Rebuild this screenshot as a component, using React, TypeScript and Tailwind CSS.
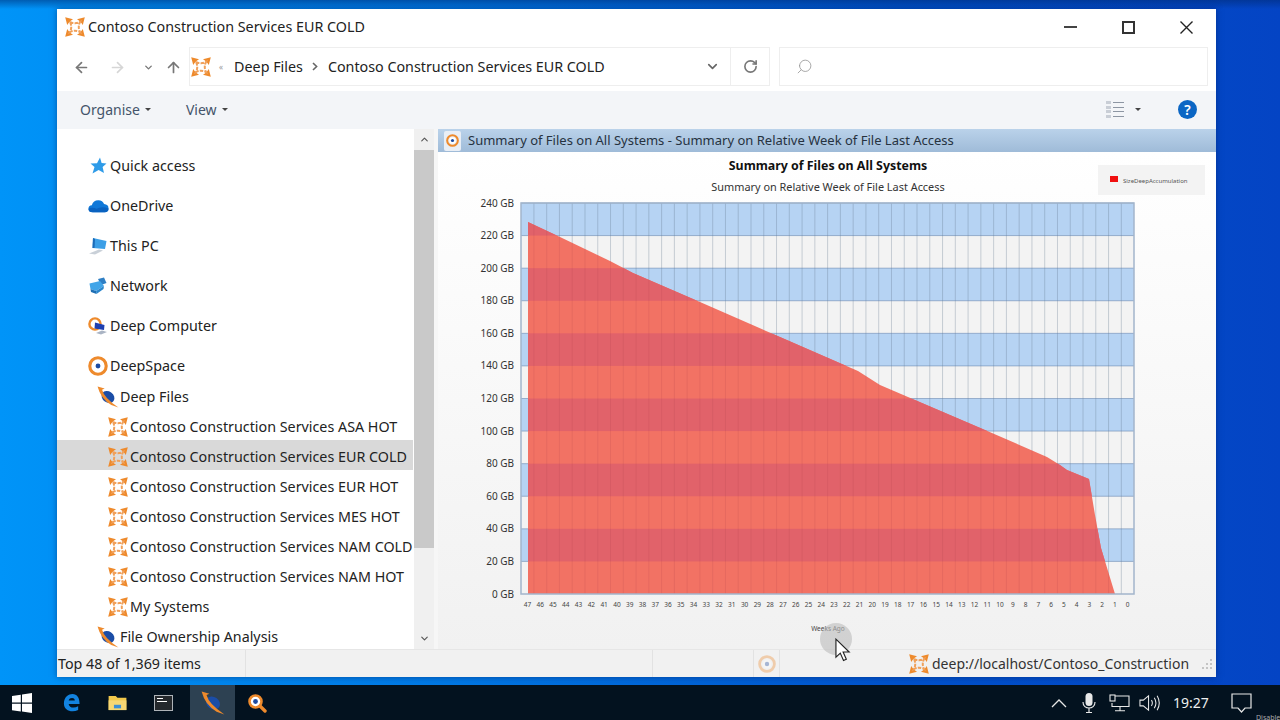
import { ArrowLeft, ArrowRight, ArrowUp, ChevronDown, ChevronUp, RotateCw, Search } from "lucide-react";

const font = "font-['Noto_Sans','Open_Sans',sans-serif]";

function DeepLogo({ className = "w-5 h-5", opacity = 1 }: { className?: string; opacity?: number }) {
	return (
		<svg viewBox="0 0 20 20" className={`shrink-0 ${className}`} opacity={opacity}>
			<g fill="#ee8a2c">
				<path d="M0.2 0.2 L8 2.2 L5.8 3.8 L3.8 5.8 L2.2 8 Z" />
				<path d="M19.8 0.2 L17.8 8 L16.2 5.8 L14.2 3.8 L12 2.2 Z" />
				<path d="M0.2 19.8 L2.2 12 L3.8 14.2 L5.8 16.2 L8 17.8 Z" />
				<path d="M19.8 19.8 L12 17.8 L14.2 16.2 L16.2 14.2 L17.8 12 Z" />
			</g>
			<path d="M5 5 Q10 7.5 15 5 Q12.5 10 15 15 Q10 12.5 5 15 Q7.5 10 5 5 Z" fill="none" stroke="#f0a05a" strokeWidth="2" strokeDasharray="3.5 1.2" />
		</svg>
	);
}

function TargetIcon({ className = "w-5 h-5", opacity = 1 }: { className?: string; opacity?: number }) {
	return (
		<svg viewBox="0 0 18 18" className={`shrink-0 ${className}`} opacity={opacity}>
			<circle cx="9" cy="9" r="7.4" fill="none" stroke="#ee8a2c" strokeWidth="2.8" />
			<circle cx="9" cy="9" r="4.4" fill="#fff" />
			<circle cx="9" cy="9" r="2.2" fill="#1c4aa0" />
		</svg>
	);
}

function PlanetIcon({ className = "w-[22px] h-[22px]" }: { className?: string }) {
	return (
		<svg viewBox="0 0 20 20" className={`shrink-0 ${className}`}>
			<ellipse cx="10" cy="10" rx="6.2" ry="5" transform="rotate(35 10 10)" fill="#1b4da6" />
			<path d="M0.5 0.5 L7 2.2 L4.6 3.4 Q6.5 11 19.5 19.5 L13 17.2 Q3.5 12 0.5 0.5 Z" fill="#ee8a2c" />
		</svg>
	);
}

function QuickIcon() {
	return (
		<svg viewBox="0 0 18 18" className="h-[18px] w-[18px] shrink-0">
			<path d="M11 0.5 L12.6 6 L17.5 6.6 L13.6 10 L15 16 L9.6 13 L3.5 16.5 L5.5 10 L1.5 6.5 L8 6.2 Z" fill="#2e9be8" />
		</svg>
	);
}

function CloudIcon() {
	return (
		<svg viewBox="0 0 22 14" className="h-[14px] w-[21px] shrink-0">
			<path d="M5 13.5 Q0.5 13.5 0.5 9.8 Q0.5 6.6 4 6.3 Q5.5 1 10.8 1 Q15.5 1 16.8 5 Q21.5 5.4 21.5 9.6 Q21.5 13.5 17.5 13.5 Z" fill="#1078d8" />
			<path d="M5 13.5 Q0.5 13.5 0.5 9.8 Q5 8 9 10 Q14 7 21.5 9.6 Q21.5 13.5 17.5 13.5 Z" fill="#0a62c0" />
		</svg>
	);
}

function PcIcon() {
	return (
		<svg viewBox="0 0 20 18" className="h-[18px] w-5 shrink-0">
			<path d="M5 1 L18.5 4 L17 12 L4.5 11 Z" fill="#3c9fe6" />
			<path d="M5 1 L7 2 L6.5 11 L4.5 11 Z" fill="#1b6bb8" />
			<path d="M1 16.5 L11 12.5 L15 13.5 L7 17.5 Z" fill="#c9d0d8" />
		</svg>
	);
}

function NetworkIcon() {
	return (
		<svg viewBox="0 0 20 18" className="h-[18px] w-5 shrink-0">
			<path d="M10 2 L16 0.5 L18.5 6 L13 8 Z" fill="#2f7fc4" />
			<path d="M1.5 6.5 L12 4 L16 9 L8 14 L2.5 12 Z" fill="#42a5e8" />
			<path d="M2.5 12 L8 14 L8.5 17 L3 15 Z" fill="#1e6fb4" />
			<path d="M8 14 L16 9 L15.5 12 L8.5 17 Z" fill="#2a86cc" />
		</svg>
	);
}

function DeepComputerIcon() {
	return (
		<svg viewBox="0 0 20 18" className="h-[18px] w-5 shrink-0">
			<circle cx="7" cy="7" r="5.6" fill="none" stroke="#ee8a2c" strokeWidth="2.4" />
			<path d="M7 5.5 L16.5 8 L16 13 L6.5 11.5 Z" fill="#1f3fb0" />
			<path d="M8 16 L14 13.5 L19 15 L13 17.5 Z" fill="#aab4c4" />
		</svg>
	);
}

const plain = [
	{ label: "Quick access", icon: <QuickIcon /> },
	{ label: "OneDrive", icon: <CloudIcon /> },
	{ label: "This PC", icon: <PcIcon /> },
	{ label: "Network", icon: <NetworkIcon /> },
	{ label: "Deep Computer", icon: <DeepComputerIcon /> },
];

const systems = [
	"Contoso Construction Services ASA HOT",
	"Contoso Construction Services EUR COLD",
	"Contoso Construction Services EUR HOT",
	"Contoso Construction Services MES HOT",
	"Contoso Construction Services NAM COLD",
	"Contoso Construction Services NAM HOT",
	"My Systems",
];

function Sidebar() {
	return (
		<div className="flex w-[381px] shrink-0">
			<div className="w-[356px] overflow-hidden bg-white pt-[16px] text-[14.3px] text-[#222]">
				{plain.map((p) => (
					<div key={p.label} className="flex h-[40px] items-center pl-[29px] pt-[2px]">
						<div className="flex w-[24px] shrink-0 justify-center">{p.icon}</div>
						<span className="whitespace-nowrap">{p.label}</span>
					</div>
				))}
				<div className="flex h-[40px] items-center pl-[29px] pt-[2px]">
					<div className="flex w-[24px] shrink-0 justify-center"><TargetIcon /></div>
					<span>DeepSpace</span>
				</div>
				<div className="-mt-[5px] flex h-[30px] items-center pl-[39px] pt-[4px]">
					<div className="flex w-[24px] shrink-0 justify-center"><PlanetIcon /></div>
					<span>Deep Files</span>
				</div>
				{systems.map((s) => (
					<div
						key={s}
						className={`flex h-[30px] items-center whitespace-nowrap pl-[49px] pt-[4px] ${s.endsWith("EUR COLD") ? "bg-[#d9d9d9]" : ""}`}
					>
						<div className="flex w-[24px] shrink-0 justify-center"><DeepLogo /></div>
						<span>{s}</span>
					</div>
				))}
				<div className="flex h-[30px] items-center pl-[39px] pt-[4px]">
					<div className="flex w-[24px] shrink-0 justify-center"><PlanetIcon /></div>
					<span>File Ownership Analysis</span>
				</div>
			</div>
			<div className="ml-[1px] flex w-[20px] flex-col bg-[#f0f0f0]">
				<div className="flex h-[21px] items-center justify-center"><ChevronUp size={11} strokeWidth={2.5} className="text-[#555]" /></div>
				<div className="h-[398px] bg-[#c9c9c9]" />
				<div className="flex-1" />
				<div className="flex h-[21px] items-center justify-center"><ChevronDown size={11} strokeWidth={2.5} className="text-[#555]" /></div>
			</div>
			<div className="w-[4px] bg-[#f6f6f6]" />
		</div>
	);
}

// chart coordinates are relative to the pane, which starts at 438,152
const ox = 438;
const oy = 152;
const plotL = 521 - ox;
const plotR = 1134 - ox;
const plotT = 203 - oy;
const plotB = 594 - oy;
const band = (plotB - plotT) / 12;
const weekX = (w: number) => 1127.7 - 12.77 * w - ox;

const edge: [number, number][] = [
	[528, 222], [560, 237], [610, 261], [633, 273], [700, 302], [780, 337], [858, 371], [880, 385],
	[985, 430], [1047, 457], [1060, 465], [1067, 470], [1089, 479], [1095, 515], [1101, 548], [1115, 594], [1128, 594], [528, 594],
];
const redPoints = edge.map(([x, y]) => `${x - ox},${y - oy}`).join(" ");
const weeks = Array.from({ length: 48 }, (_, i) => 47 - i);
const bands = Array.from({ length: 12 }, (_, i) => i);

function Chart() {
	return (
		<svg viewBox="0 0 778 497" className="block h-[497px] w-[778px] font-['Noto_Sans',sans-serif]">
			<defs>
				<clipPath id="red-area"><polygon points={redPoints} /></clipPath>
				<linearGradient id="pane-bg" x1="0" y1="0" x2="0" y2="1">
					<stop offset="0" stopColor="#ffffff" />
					<stop offset="1" stopColor="#f1f1f1" />
				</linearGradient>
			</defs>
			<rect width="778" height="497" fill="url(#pane-bg)" />
			<text x="390" y="18" textAnchor="middle" fontSize="12.4" fontWeight="700" fill="#111">Summary of Files on All Systems</text>
			<text x="390" y="38.5" textAnchor="middle" fontSize="10.9" fill="#333">Summary on Relative Week of File Last Access</text>

			<rect x="660" y="13" width="107" height="30" fill="#f3f3f3" />
			<rect x="672" y="24" width="8" height="6" fill="#f01010" />
			<text x="685" y="31" fontSize="6" fill="#555">SizeDeepAccumulation</text>

			<rect x={plotL} y={plotT} width={plotR - plotL} height={plotB - plotT} fill="#f3f3f3" />
			{bands.map((i) => i % 2 === 0 && (
				<rect key={i} x={plotL} y={plotT + i * band} width={plotR - plotL} height={band} fill="#b6d3f3" />
			))}
			{weeks.slice(0, 47).map((w) => (
				<line key={w} x1={weekX(w) + 6.4} x2={weekX(w) + 6.4} y1={plotT} y2={plotB} stroke="#64788f" strokeOpacity="0.32" />
			))}
			{bands.map((i) => (
				<line key={i} x1={plotL} x2={plotR} y1={plotT + i * band} y2={plotT + i * band} stroke="#5a7aa5" strokeOpacity="0.5" />
			))}
			<polygon points={redPoints} fill="#f27264" />
			<g clipPath="url(#red-area)">
				{bands.map((i) => i % 2 === 0 && (
					<rect key={i} x={plotL} y={plotT + i * band} width={plotR - plotL} height={band} fill="#e1626a" />
				))}
				{weeks.slice(0, 47).map((w) => (
					<line key={w} x1={weekX(w) + 6.4} x2={weekX(w) + 6.4} y1={plotT} y2={plotB} stroke="#a8404a" strokeOpacity="0.16" />
				))}
			</g>
			<rect x={plotL} y={plotT} width={plotR - plotL} height={plotB - plotT} fill="none" stroke="#a3b5cb" strokeWidth="1.5" />

			{Array.from({ length: 13 }, (_, i) => (
				<text key={i} x={plotL - 7} y={plotB - i * band + 3.5} textAnchor="end" fontSize="10" fill="#333">{`${i * 20} GB`}</text>
			))}
			{weeks.map((w) => (
				<text key={w} x={weekX(w)} y={plotB + 13} textAnchor="middle" fontSize="6.5" fill="#444">{w}</text>
			))}
			<text x="390" y="479" textAnchor="middle" fontSize="6.5" fill="#444">Weeks Ago</text>
		</svg>
	);
}

function Cursor() {
	return (
		<div className="pointer-events-none absolute left-[382px] top-[494px] z-10 h-[32px] w-[32px] rounded-full bg-[#bdbdbd]/60">
			<svg viewBox="0 0 18 26" className="absolute left-[15px] top-[15px] h-[25px] w-[17px]">
				<path d="M1 1 L1 20 L5.6 15.8 L9 23.5 L12 22.2 L8.6 14.6 L15 14.6 Z" fill="#fff" stroke="#222" strokeWidth="1.2" />
			</svg>
		</div>
	);
}

function Taskbar() {
	return (
		<div className="flex h-[35px] items-center bg-[#03121f] text-white">
			<div className="flex w-[44px] justify-center">
				<svg viewBox="0 0 20 20" className="h-[20px] w-[20px]">
					<path d="M0 3 L8.8 1.7 V9.5 H0 Z M10 1.5 L20 0 V9.5 H10 Z M0 10.7 H8.8 V18.5 L0 17.2 Z M10 10.7 H20 V20 L10 18.6 Z" fill="#fff" />
				</svg>
			</div>
			<div className="flex w-[54px] justify-center">
				<svg viewBox="0 0 20 20" className="h-[19px] w-[19px]">
					<path d="M2 11 C2 4 7 1 11 1 C16 1 18.5 5 18.5 11.5 H7 C7.5 15.5 12.5 16.5 17 14 V18 C10 21 2 18.5 2 11 Z M7 8 H13.5 C13.5 4.5 7.8 4.5 7 8 Z" fill="#1283e0" fillRule="evenodd" />
				</svg>
			</div>
			<div className="flex w-[38px] justify-center">
				<svg viewBox="0 0 20 18" className="h-[16px] w-[19px]">
					<path d="M0 1 H8 L10 3 H20 V17 H0 Z" fill="#f2c94c" />
					<rect x="0" y="6" width="20" height="11" fill="#f7d774" />
					<rect x="6" y="11" width="8" height="4" fill="#3d8fd6" />
				</svg>
			</div>
			<div className="flex w-[54px] justify-center">
				<div className="h-[16px] w-[19px] border border-[#aeb3b8] bg-[#24282c] pl-[2px] pt-[2px]">
					<div className="h-[1px] w-[6px] bg-white" />
					<div className="mt-[2px] h-[1px] w-[10px] bg-white" />
				</div>
			</div>
			<div className="flex h-full w-[45px] items-center justify-center bg-[#2d4152]">
				<PlanetIcon className="h-[24px] w-[24px]" />
			</div>
			<div className="flex w-[50px] justify-center">
				<svg viewBox="0 0 20 20" className="-ml-[6px] h-[20px] w-[20px]">
					<path d="M12 12 L18 18" stroke="#ee8a2c" strokeWidth="3.4" strokeLinecap="round" />
					<circle cx="8.5" cy="8.5" r="6" fill="#fff" stroke="#ee8a2c" strokeWidth="2.6" />
					<circle cx="8.5" cy="8.5" r="2.4" fill="#1c4aa0" />
				</svg>
			</div>
			<div className="flex-1" />
			<svg viewBox="0 0 16 10" fill="none" stroke="#e6e6e6" strokeWidth="1.3" className="h-[10px] w-[16px]">
				<path d="M1 9 L8 2 L15 9" />
			</svg>
			<svg viewBox="0 0 14 20" className="ml-[15px] h-[20px] w-[14px]">
				<rect x="3.5" y="0" width="7" height="13" rx="3.5" fill="#e8e8e8" />
				<path d="M1 9 C1 17 13 17 13 9 M7 15.5 V19 M4 19.5 H10" fill="none" stroke="#e8e8e8" strokeWidth="1.2" />
			</svg>
			<svg viewBox="0 0 21 18" fill="none" stroke="#e8e8e8" strokeWidth="1.1" className="ml-[13px] h-[18px] w-[21px]">
				<path d="M6 2 H20 V12.5 H3 V9 M11 12.5 V16.5 M6 16.8 H16" />
				<rect x="1" y="1" width="5" height="6" fill="#03121f" />
			</svg>
			<svg viewBox="0 0 22 18" fill="none" stroke="#e8e8e8" strokeWidth="1.1" className="ml-[9px] h-[18px] w-[21px]">
				<path d="M1 6 H4.5 L10 1.5 V16.5 L4.5 12 H1 Z M13 6 Q15 9 13 12 M16 3.5 Q19.5 9 16 14.5 M19 1.5 Q23.5 9 19 16.5" />
			</svg>
			<span className={`ml-[13px] w-[36px] text-[14px] text-[#eee] ${font}`}>19:27</span>
			<svg viewBox="0 0 21 20" fill="none" stroke="#e8e8e8" strokeWidth="1.2" className="ml-[22px] h-[20px] w-[21px]">
				<path d="M1 1 H20 V15 H14 L10.5 19 L7 15 H1 Z" />
			</svg>
			<div className="relative w-[28px] self-end overflow-hidden">
				<span className="relative top-[2px] block pl-[4px] text-[7px] leading-[8px] text-[#aaa]">Disabled</span>
			</div>
		</div>
	);
}

export default function App() {
	return (
		<div className={`flex h-screen w-[1280px] flex-col overflow-hidden ${font}`}>
			<div className="flex-1 bg-[linear-gradient(180deg,rgba(0,40,110,0.5)_0,rgba(0,40,110,0)_9px),linear-gradient(90deg,#0094f8_0%,#0078e4_35%,#0052cc_70%,#0444c4_100%)] pl-[57px] pt-[9px]">
				<div className="flex h-[668px] w-[1159px] flex-col bg-white shadow-[0_0_6px_rgba(0,30,90,0.5)]">
					{/* Title bar */}
					<div className="flex h-[37px] shrink-0 items-center pb-[1px] pl-[8px]">
						<DeepLogo className="h-[20px] w-[20px]" />
						<span className="ml-[3px] text-[14.3px] text-[#222]">Contoso Construction Services EUR COLD</span>
						<div className="flex-1" />
						<div className="h-[2px] w-[13px] bg-[#444]" />
						<div className="ml-[45px] h-[13px] w-[13px] border-2 border-[#333]" />
						<svg viewBox="0 0 13 13" className="ml-[45px] mr-[23px] h-[13px] w-[13px]" stroke="#222" strokeWidth="1.4">
							<path d="M0.5 0.5 L12.5 12.5 M12.5 0.5 L0.5 12.5" />
						</svg>
					</div>
					{/* Address row */}
					<div className="flex h-[45px] shrink-0 items-start pt-[1px]">
						<div className="flex h-[40px] w-[132px] items-center pl-[16px]">
							<ArrowLeft size={17} strokeWidth={2.4} className="text-[#777]" />
							<ArrowRight size={17} strokeWidth={2.4} className="ml-[19px] text-[#d6d6d6]" />
							<ChevronDown size={11} strokeWidth={3} className="ml-[17px] text-[#777]" />
							<ArrowUp size={17} strokeWidth={2.4} className="ml-[11px] text-[#777]" />
						</div>
						<div className="flex h-[39px] w-[581px] items-center border border-[#eeeeee] bg-white pl-[1px] text-[14.3px] text-[#222]">
							<DeepLogo className="h-[20px] w-[20px]" />
							<span className="ml-[8px] text-[8px] text-[#999]">«</span>
							<span className="ml-[11px]">Deep Files</span>
							<svg viewBox="0 0 6 9" fill="none" stroke="#666" strokeWidth="1.6" className="ml-[9px] mr-[10px] h-[9px] w-[6px]">
								<path d="M1 1 L4.6 4.5 L1 8" />
							</svg>
							<span>Contoso Construction Services EUR COLD</span>
							<div className="flex-1" />
							<ChevronDown size={15} strokeWidth={2.6} className="text-[#666]" />
							<div className="ml-[10px] flex h-full w-[39px] items-center justify-center border-l border-[#eeeeee]">
								<RotateCw size={15} strokeWidth={2.6} className="text-[#777]" />
							</div>
						</div>
						<div className="ml-[9px] flex h-[39px] w-[429px] items-center border border-[#eeeeee] pl-[16px]">
							<Search size={17} strokeWidth={1.2} className="-scale-x-100 text-[#999]" />
						</div>
					</div>
					{/* Toolbar */}
					<div className="flex h-[38px] shrink-0 items-center bg-[#f3f5f8] pb-[1px] pl-[23px] text-[14px] text-[#44546a]">
						<span>Organise</span>
						<span className="ml-[5px] border-x-[3px] border-t-[3px] border-x-transparent border-t-[#444]" />
						<span className="ml-[35px]">View</span>
						<span className="ml-[5px] border-x-[3px] border-t-[3px] border-x-transparent border-t-[#444]" />
						<div className="flex-1" />
						<div className="flex h-[17px] w-[18px] flex-col justify-between">
							{[0, 1, 2, 3].map((i) => (
								<div key={i} className="flex items-center gap-[2px]">
									<div className="h-[3px] w-[5px] bg-[#c9ced6]" />
									<div className="h-[1px] flex-1 bg-[#8d96a3]" />
								</div>
							))}
						</div>
						<span className="ml-[11px] border-x-[3px] border-t-[3px] border-x-transparent border-t-[#444]" />
						<div className="ml-[37px] mr-[19px] flex h-[19px] w-[19px] items-center justify-center rounded-full bg-[#0b66c4] text-[14px] font-semibold text-white">?</div>
					</div>
					{/* Content */}
					<div className="flex min-h-0 flex-1">
						<Sidebar />
						<div className="relative flex-1">
							<div className="flex h-[23px] items-center bg-[linear-gradient(180deg,#bad2ea,#9fbbd8)] pl-[6px] text-[13px] text-[#26323f]">
								<div className="flex h-[20px] w-[17px] items-center justify-center rounded-[2px] bg-[#e9eef5]">
									<TargetIcon className="h-[13px] w-[13px]" />
								</div>
								<span className="ml-[7px] whitespace-nowrap pt-[1px]">Summary of Files on All Systems - Summary on Relative Week of File Last Access</span>
							</div>
							<Chart />
							<Cursor />
						</div>
					</div>
					{/* Status bar */}
					<div className="flex h-[28px] shrink-0 items-center border-t border-[#e6e6e6] bg-[#f1f1f1] text-[14.3px] text-[#222]">
						<div className="flex h-full w-[188px] items-center pl-[1px]">Top 48 of 1,369 items</div>
						<div className="h-full w-[407px] border-l border-[#e2e2e2]" />
						<div className="h-full w-[101px] border-l border-[#e2e2e2]" />
						<div className="flex h-full w-[27px] items-center justify-center border-x border-[#e2e2e2]">
							<TargetIcon opacity={0.35} className="h-[18px] w-[18px]" />
						</div>
						<div className="w-[129px]" />
						<div className="flex min-w-0 flex-1 items-center overflow-hidden">
							<DeepLogo className="h-[20px] w-[20px]" />
							<span className="ml-[3px] whitespace-nowrap text-[14px] text-[#333]">deep://localhost/Contoso_Construction</span>
						</div>
						<svg viewBox="0 0 12 12" className="mr-[3px] ml-[6px] h-[12px] w-[12px] shrink-0" fill="#c4c4c4">
							<rect x="9" y="1" width="2" height="2" />
							<rect x="5" y="5" width="2" height="2" />
							<rect x="9" y="5" width="2" height="2" />
							<rect x="1" y="9" width="2" height="2" />
							<rect x="5" y="9" width="2" height="2" />
							<rect x="9" y="9" width="2" height="2" />
						</svg>
					</div>
				</div>
			</div>
			<Taskbar />
		</div>
	);
}
